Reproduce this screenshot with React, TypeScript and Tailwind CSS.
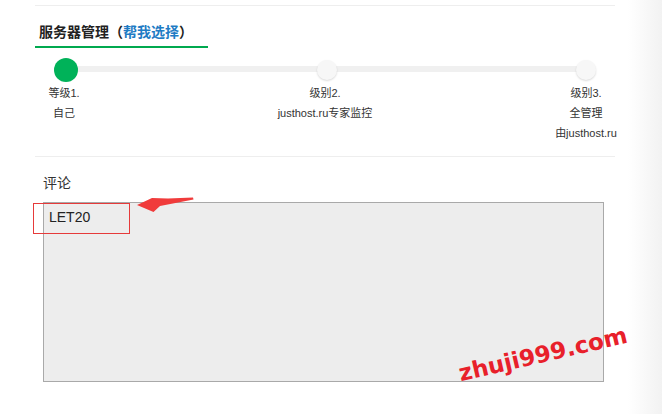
import React from 'react'

const levels = [
  { title: '等级1.', lines: ['自己'] },
  { title: '级别2.', lines: ['justhost.ru专家监控'] },
  { title: '级别3.', lines: ['全管理', '由justhost.ru'] },
]

export default function App() {
  return (
    <div
      className="relative h-[414px] w-[662px] overflow-hidden bg-white text-[#333]"
      style={{ fontFamily: '"Liberation Sans", "Noto Sans CJK SC", sans-serif' }}
    >
      {/* right edge fade */}
      <div className="pointer-events-none absolute right-0 top-0 h-full w-[34px] bg-linear-to-r from-white to-[#f2f2f2]" />

      <div className="ml-[35px] w-[580px] pt-[5px]">
        <div className="border-t border-[#eeeeee]" />

        {/* heading tab */}
        <div className="pt-[16px]">
          <div className="w-[173px] border-b-2 border-[#00a94f] pb-[4px] pl-[4px] text-[14px] font-bold leading-[20px] text-[#222]">
            服务器管理（<span className="text-[#1f7cc4]">帮我选择</span>）
          </div>
        </div>

        {/* level slider */}
        <div className="relative ml-[19px] mt-[10px] flex h-[24px] w-[542px] items-center justify-between">
          <div className="absolute left-[12px] right-[10px] top-[8px] h-[6px] bg-[#f0f0f0]" />
          <div className="relative h-[24px] w-[24px] rounded-full bg-[#00b259]" />
          <div className="relative h-[20px] w-[20px] rounded-full bg-[#f7f7f7] shadow-[0_1px_2px_rgba(0,0,0,0.15)]" />
          <div className="relative h-[20px] w-[20px] rounded-full bg-[#f7f7f7] shadow-[0_1px_2px_rgba(0,0,0,0.15)]" />
        </div>

        <div className="ml-[29px] mt-[1px] flex w-[522px] justify-between text-[11px] leading-[20px] text-[#333]">
          {levels.map((l) => (
            <div key={l.title} className="flex w-0 flex-col items-center whitespace-nowrap">
              <span>{l.title}</span>
              {l.lines.map((t) => (
                <span key={t}>{t}</span>
              ))}
            </div>
          ))}
        </div>

        <div className="mt-[13px] border-t border-[#eeeeee]" />

        {/* comment */}
        <div className="mt-[16px] pl-[8px] text-[14px] leading-[20px] text-[#333]">评论</div>
        <div className="ml-[8px] mt-[9px] h-[180px] w-[561px] border border-[#a9a9a9] bg-[#ededed] px-[5px] pt-[4px] text-[14px] leading-[20px] text-[#222]">
          LET20
        </div>
      </div>

      {/* annotation: red box + arrow */}
      <svg className="absolute left-[30px] top-[190px]" width="170" height="48" viewBox="30 190 170 48">
        <rect x="33.5" y="203.5" width="96" height="30" fill="none" stroke="#e63a3a" strokeWidth="1" />
        <polygon
          points="137,205 152,198 168,198.5 193,197.5 193.5,199.5 160,206 153.5,212"
          fill="#f03b3b"
        />
      </svg>

      {/* watermark */}
      <div
        className="absolute left-[456px] top-[343px] w-[174px] rotate-[-13deg] text-center text-[23px] font-bold leading-none text-[#e8202a]"
        style={{ fontFamily: '"DejaVu Sans", sans-serif' }}
      >
        zhuji999.com
      </div>
    </div>
  )
}
